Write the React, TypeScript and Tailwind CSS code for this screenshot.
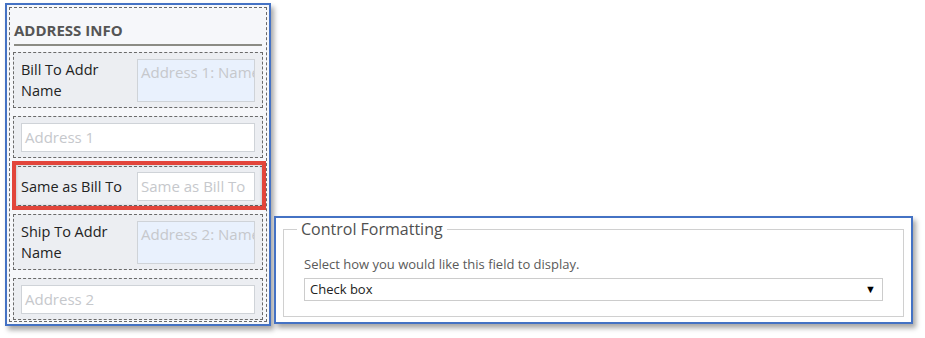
import React from "react";

const FONT = { fontFamily: '"Open Sans", "Noto Sans", Arial, sans-serif' };

type FieldProps = {
  label?: string[];
  placeholder: string;
  tall?: boolean;
  tinted?: boolean;
  highlight?: boolean;
};

function Field({ label, placeholder, tall, tinted, highlight }: FieldProps) {
  const rowH = tall ? "h-[56px]" : label ? "h-[40px]" : "h-[42px]";
  return (
    <div
      className={`relative border border-dashed border-[#6a6a6a] bg-[#eceef2] px-[7px] ${rowH} ${
        tall ? "pt-[6px]" : "flex items-center"
      }`}
    >
      {label ? (
        <div className={`flex w-full ${tall ? "items-start" : "items-center"}`}>
          <div className="w-[116px] text-[14.5px] leading-[21px] text-[#222]">
            {label.map((l, i) => (
              <div key={i}>{l}</div>
            ))}
          </div>
          <div
            className={`flex-1 overflow-hidden whitespace-nowrap border border-[#cfd3d8] pl-[3px] text-[15px] text-[#c6c8cc] ${
              tall ? "h-[43px] pt-[1px] leading-[22px]" : "h-[29px] leading-[27px]"
            } ${tinted ? "bg-[#e9f1fd]" : "bg-white"}`}
          >
            {placeholder}
          </div>
        </div>
      ) : (
        <div className="h-[29px] w-full border border-[#cfd3d8] bg-white pl-[3px] text-[15px] leading-[27px] text-[#c6c8cc]">
          {placeholder}
        </div>
      )}
      {highlight && (
        <div className="pointer-events-none absolute left-[-2px] right-[-4px] top-[-6px] bottom-[-5px] border-4 border-[#e2453b] shadow-[inset_0_0_3px_rgba(0,0,0,0.25)]" />
      )}
    </div>
  );
}

export default function App() {
  return (
    <div className="min-h-[338px] w-[925px] bg-white" style={FONT}>
      <div className="flex items-start pl-[5px] pt-[3px]">
        {/* left form panel */}
        <div className="w-[266px] border-2 border-[#4472c4] bg-[#f6f7fa] p-[2px] shadow-[3px_4px_5px_rgba(0,0,0,0.35)]">
          <div className="border border-dashed border-[#6a6a6a] px-[3px] pt-[12px] pb-[1px]">
            <div className="px-[1px] text-[15px] font-bold leading-[20px] text-[#555]">
              ADDRESS INFO
            </div>
            <div className="mx-[1px] mt-[4px] h-[2px] bg-[#8b8b84]" />
            <div className="mt-[6px] flex flex-col gap-[8px]">
              <Field label={["Bill To Addr", "Name"]} placeholder="Address 1: Name" tall tinted />
              <Field placeholder="Address 1" />
              <Field label={["Same as Bill To"]} placeholder="Same as Bill To" highlight />
              <Field label={["Ship To Addr", "Name"]} placeholder="Address 2: Name" tall tinted />
              <Field placeholder="Address 2" />
            </div>
          </div>
        </div>

        {/* right control formatting panel */}
        <div className="ml-[3px] mt-[213px] w-[639px] border-2 border-[#4472c4] bg-white px-[7px] pb-[5px] pt-[1px] shadow-[3px_4px_5px_rgba(0,0,0,0.35)]">
          <fieldset className="border border-[#d0d0d0] px-[20px] pb-[15px]">
            <legend className="ml-[-7px] px-[4px] text-[16px] leading-[20px] text-[#505050]">
              Control Formatting
            </legend>
            <div className="mt-[17px] text-[13px] leading-[16px] text-[#5a5a5a]">
              Select how you would like this field to display.
            </div>
            <div className="mt-[6px] flex h-[23px] items-center justify-between border border-[#cccccc] pl-[5px] pr-[6px] text-[13px] text-[#222]">
              <span>Check box</span>
              <span className="text-[11px] text-black">▼</span>
            </div>
          </fieldset>
        </div>
      </div>
    </div>
  );
}
